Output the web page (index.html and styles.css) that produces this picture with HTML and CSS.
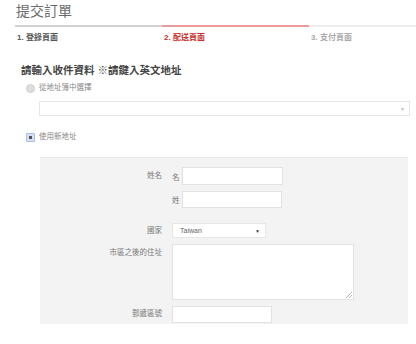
FILE: index.html
```html
<!DOCTYPE html>
<html lang="zh-Hant">
<head>
  <meta charset="UTF-8">
  <title>提交訂單</title>
  <link rel="stylesheet" href="styles.css">
</head>
<body>
<div class="page">
  <h1 class="title">提交訂單</h1>

  <div class="steps">
    <div class="step done">1. 登錄頁面</div>
    <div class="step active">2. 配送頁面</div>
    <div class="step">3. 支付頁面</div>
  </div>

  <h2 class="section-title">請輸入收件資料 ※請鍵入英文地址</h2>

  <label class="choice">
    <span class="radio"></span>
    <span>從地址簿中選擇</span>
  </label>
  <div class="select wide"><span></span><span class="arrow">▼</span></div>

  <label class="choice new-address">
    <span class="checkbox"><span class="dot"></span></span>
    <span>使用新地址</span>
  </label>

  <div class="address-panel">
    <div class="row">
      <div class="row-label name-label">姓名</div>
      <div class="row-field">
        <div class="sub-row">
          <span class="sub-label">名</span>
          <input class="text-input" type="text" />
        </div>
        <div class="sub-row last-name">
          <span class="sub-label">姓</span>
          <input class="text-input" type="text" />
        </div>
      </div>
    </div>

    <div class="row country-row">
      <div class="row-label country-label">國家</div>
      <div class="row-field">
        <div class="select country"><span>Taiwan</span><span class="arrow dark">▼</span></div>
      </div>
    </div>

    <div class="row street-row">
      <div class="row-label street-label">市區之後的住址</div>
      <div class="row-field">
        <div class="street-wrap">
          <textarea class="street"></textarea>
          <svg class="grip" width="6" height="6" viewBox="0 0 6 6">
            <path d="M6 0 L0 6 M6 3 L3 6" stroke="#b5b5b5" stroke-width="1" />
          </svg>
        </div>
      </div>
    </div>

    <div class="row zip-row">
      <div class="row-label zip-label">郵遞區號</div>
      <div class="row-field">
        <input class="text-input zip" type="text" />
      </div>
    </div>
  </div>
</div>
</body>
</html>
```

FILE: styles.css
```css
body {
  margin: 0;
  padding: 0;
  background-color: white;
  font-family: "Liberation Sans", "Noto Sans CJK TC", sans-serif;
  color: #777;
  overflow: hidden;
}

.page {
  width: 416px;
  overflow: hidden;
}

.title {
  margin: 0;
  padding: 2px 0 0 16px;
  font-size: 14px;
  line-height: 18px;
  font-weight: normal;
  color: #6a6a6a;
}

.steps {
  display: flex;
  margin-top: 5px;
  margin-left: 15px;
  width: 440px;
}

.step {
  flex: 0 0 145px;
  border-top: 2px solid #eeeeee;
  padding: 6px 0 0 2px;
  font-size: 8px;
  line-height: 10px;
  font-weight: bold;
  color: #aaa;
}

.step.done {
  border-top-color: #d2d2d2;
  color: #555;
}

.step.active {
  border-top-color: #e99a9a;
  color: #c9302c;
}

.section-title {
  margin: 20px 0 0 21px;
  font-size: 10.5px;
  line-height: 14px;
  font-weight: bold;
  color: #444;
}

.choice {
  display: flex;
  align-items: center;
  gap: 4px;
  margin: 6px 0 0 26px;
  font-size: 7.5px;
  line-height: 10px;
  color: #888;
}

.radio {
  width: 7px;
  height: 7px;
  border-radius: 50%;
  border: 1px solid #cfcfcf;
  background-color: #dedede;
}

.checkbox {
  display: flex;
  justify-content: center;
  align-items: center;
  width: 7px;
  height: 7px;
  border: 1px solid #a9bfe4;
  border-radius: 1px;
  background-color: #d3e1f7;
}

.checkbox .dot {
  width: 3px;
  height: 3px;
  background-color: #555;
}

.new-address {
  margin-top: 16px;
}

.select {
  display: flex;
  justify-content: space-between;
  align-items: center;
  box-sizing: border-box;
  border: 1px solid #e6e6e6;
  background-color: white;
  font-size: 7px;
  color: #666;
}

.select.wide {
  margin: 8px 0 0 39px;
  width: 371px;
  height: 15px;
  padding: 0 4px 0 6px;
}

.arrow {
  font-size: 5px;
  color: #bbb;
}

.arrow.dark {
  color: #444;
}

.address-panel {
  margin: 15px 0 0 40px;
  width: 368px;
  height: 167px;
  box-sizing: border-box;
  padding-top: 9px;
  background-color: #f3f3f3;
  border-top: 1px solid #e9e9e9;
}

.row {
  display: grid;
  grid-template-columns: 122px 1fr;
  column-gap: 10px;
}

.row-label {
  text-align: right;
  font-size: 7.5px;
  line-height: 10px;
  color: #777;
}

.name-label {
  padding-top: 4px;
}

.sub-row {
  display: flex;
  align-items: center;
  gap: 1px;
}

.sub-row.last-name {
  margin-top: 6px;
}

.sub-label {
  width: 9px;
  font-size: 7.5px;
  color: #777;
}

.text-input {
  box-sizing: border-box;
  margin: 0;
  width: 101px;
  height: 18px;
  border: 1px solid #e2e2e2;
  border-radius: 0;
  background-color: white;
  padding: 0;
}

.last-name .text-input {
  height: 17px;
  width: 100px;
}

.country-row {
  margin-top: 15px;
}

.country-label {
  padding-top: 3px;
}

.select.country {
  width: 94px;
  height: 15px;
  padding: 0 5px 0 7px;
  color: #666;
}

.street-row {
  margin-top: 6px;
}

.street-label {
  padding-top: 4px;
}

.street-wrap {
  position: relative;
  width: 182px;
  height: 56px;
}

.street {
  display: block;
  box-sizing: border-box;
  margin: 0;
  width: 182px;
  height: 56px;
  border: 1px solid #e2e2e2;
  border-radius: 0;
  background-color: white;
  resize: none;
}

.grip {
  position: absolute;
  right: 2px;
  bottom: 2px;
}

.zip-row {
  margin-top: 5px;
}

.zip-label {
  padding-top: 4px;
}

.text-input.zip {
  width: 100px;
  height: 17px;
}
```
